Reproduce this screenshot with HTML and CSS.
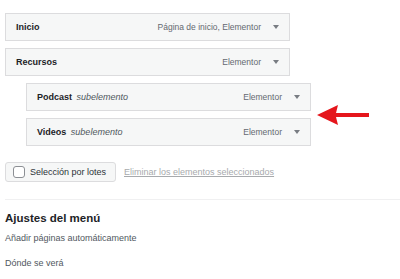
FILE: index.html
```html
<!DOCTYPE html>
<html lang="es">
<head>
<meta charset="utf-8">
<link rel="stylesheet" href="styles.css">
</head>
<body>
<div class="page">
  <ul class="menu">
    <li class="item">
      <span class="title">Inicio</span>
      <span class="meta">Página de inicio, Elementor</span>
      <span class="caret"></span>
    </li>
    <li class="item">
      <span class="title">Recursos</span>
      <span class="meta">Elementor</span>
      <span class="caret"></span>
    </li>
    <li class="item sub">
      <span class="title">Podcast <em>subelemento</em></span>
      <span class="meta">Elementor</span>
      <span class="caret"></span>
    </li>
    <li class="item sub">
      <span class="title">Videos <em>subelemento</em></span>
      <span class="meta">Elementor</span>
      <span class="caret"></span>
    </li>
  </ul>
  <div class="bulk">
    <label class="bulk-btn"><span class="check"></span>Selección por lotes</label>
    <a class="bulk-link" href="#">Eliminar los elementos seleccionados</a>
  </div>
  <div class="settings">
    <h3>Ajustes del menú</h3>
    <p>Añadir páginas automáticamente</p>
    <p>Dónde se verá</p>
  </div>
  <svg class="arrow" width="56" height="22" viewBox="0 0 56 22">
    <polygon points="0,11 21,1 19,9 52,9 52,13 19,13 21,21" fill="#e5161c"/>
  </svg>
</div>
</body>
</html>
```
FILE: styles.css
```css
html, body { margin: 0; padding: 0; background: #fff; }
body { font-family: "Liberation Sans", Arial, sans-serif; color: #1d2327; }
.page { position: relative; width: 400px; height: 279px; overflow: hidden; padding-top: 13px; box-sizing: border-box; }
.menu { list-style: none; margin: 0 0 0 5px; padding: 0; display: flex; flex-direction: column; gap: 7px; }
.item { box-sizing: border-box; width: 285px; height: 28px; background: #f6f7f7; border: 1px solid #dcdcde; display: flex; align-items: center; padding: 0 8px 0 10px; font-size: 9px; }
.item.sub { margin-left: 21px; }
.title { font-weight: 700; flex: 1; white-space: nowrap; }
.title em { font-weight: 400; color: #50575e; margin-left: 2px; }
.meta { color: #646970; white-space: nowrap; font-size: 8.5px; }
.caret { width: 0; height: 0; border-left: 3px solid transparent; border-right: 3px solid transparent; border-top: 4px solid #787c82; margin-left: 12px; margin-right: 2px; }
.bulk { display: flex; align-items: center; margin: 16px 0 0 5px; gap: 8px; }
.bulk-btn { box-sizing: border-box; height: 20px; width: 111px; border: 1px solid #dcdcde; background: #f6f7f7; border-radius: 3px; display: flex; align-items: center; padding-left: 7px; font-size: 9px; color: #2c3338; }
.check { box-sizing: border-box; width: 12px; height: 12px; border: 1px solid #8c8f94; background: #fff; border-radius: 3px; margin-right: 5px; }
.bulk-link { font-size: 9px; color: #a7aaad; text-decoration: underline; }
.settings { margin: 17px 0 0 5px; border-top: 1px solid #f0f0f1; padding-top: 10px; }
.settings h3 { margin: 0 0 5px; font-size: 11.5px; font-weight: 700; color: #1d2327; line-height: 16px; }
.settings p { margin: 0 0 11px; font-size: 9px; color: #50575e; line-height: 14px; }
.arrow { position: absolute; left: 317px; top: 104px; }
```
